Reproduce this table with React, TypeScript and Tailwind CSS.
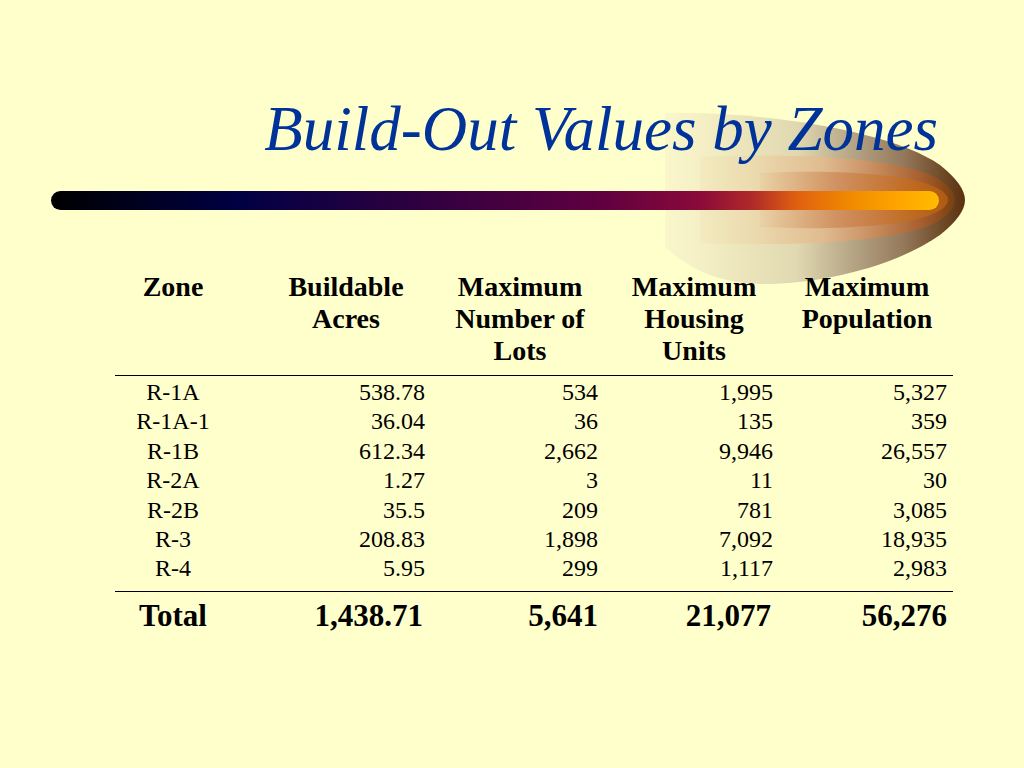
import React from "react";

const rows = [
  ["R-1A", "538.78", "534", "1,995", "5,327"],
  ["R-1A-1", "36.04", "36", "135", "359"],
  ["R-1B", "612.34", "2,662", "9,946", "26,557"],
  ["R-2A", "1.27", "3", "11", "30"],
  ["R-2B", "35.5", "209", "781", "3,085"],
  ["R-3", "208.83", "1,898", "7,092", "18,935"],
  ["R-4", "5.95", "299", "1,117", "2,983"],
];

const grid = "grid grid-cols-[144px_174px_174px_174px_172px]";

function Swoosh() {
  return (
    <svg
      className="absolute left-[660px] top-[105px]"
      width="310"
      height="185"
      viewBox="0 0 310 185"
    >
      <defs>
        <linearGradient id="gOuter" gradientUnits="userSpaceOnUse" x1="0" y1="0" x2="305" y2="0">
          <stop offset="0" stopColor="#fbf8cc" />
          <stop offset="0.15" stopColor="#f4eec4" />
          <stop offset="0.45" stopColor="#e0d8b0" />
          <stop offset="0.62" stopColor="#b8a888" />
          <stop offset="0.8" stopColor="#94785a" />
          <stop offset="0.92" stopColor="#704c2a" />
          <stop offset="1" stopColor="#5a3010" />
        </linearGradient>
        <linearGradient id="gMid" gradientUnits="userSpaceOnUse" x1="0" y1="0" x2="295" y2="0">
          <stop offset="0" stopColor="#f6ecc0" stopOpacity="0" />
          <stop offset="0.3" stopColor="#ecdcb0" />
          <stop offset="0.55" stopColor="#e0bc90" />
          <stop offset="0.7" stopColor="#cc9466" />
          <stop offset="0.88" stopColor="#a86030" />
          <stop offset="1" stopColor="#7a4010" />
        </linearGradient>
        <linearGradient id="gIn" gradientUnits="userSpaceOnUse" x1="90" y1="0" x2="288" y2="0">
          <stop offset="0" stopColor="#e0b080" stopOpacity="0" />
          <stop offset="0.45" stopColor="#d09060" />
          <stop offset="0.8" stopColor="#c06c24" />
          <stop offset="1" stopColor="#b05a10" />
        </linearGradient>
      </defs>
      <path
        d="M5,8 C100,6 230,25 280,60 Q305,80 305,95 Q305,110 280,130 C230,165 150,180 100,179 C60,178 30,165 5,142 Z"
        fill="url(#gOuter)"
      />
      <path
        d="M40,52 C150,47 250,55 280,75 Q295,85 295,95 Q295,105 280,115 C250,135 150,142 40,138 Z"
        fill="url(#gMid)"
      />
      <path
        d="M100,68 C180,64 250,70 275,82 Q288,88 288,95 Q288,102 275,108 C250,120 180,126 100,122 Z"
        fill="url(#gIn)"
      />
    </svg>
  );
}

export default function App() {
  return (
    <div
      className="relative w-[1024px] h-[768px] overflow-hidden bg-[#FFFFCC]"
      style={{ fontFamily: '"Liberation Serif", "Times New Roman", serif' }}
    >
      <Swoosh />
      <div className="relative pt-[98px]">
        <h1 className="text-right pr-[86px] text-[63px] leading-[62px] italic text-[#003399]">
          Build-Out Values by Zones
        </h1>
        <div className="mt-[31px] ml-[51px] w-[888px] h-[19px] rounded-full bg-[linear-gradient(to_right,#000000_0%,#000044_21%,#330040_43%,#600040_62%,#8a0a3a_73%,#b02a28_79%,#e06010_84%,#f08a00_90%,#ffa800_96%,#ffbb00_100%)]" />

        <div className="mt-[61px] ml-[115px] w-[838px] text-black">
          <div className={`${grid} pb-[8px] border-b border-black text-[28px] leading-[32px] font-bold`}>
            <div className="text-center pr-[28px]">Zone</div>
            <div className="text-center">
              Buildable
              <br />
              Acres
            </div>
            <div className="text-center">
              Maximum
              <br />
              Number of
              <br />
              Lots
            </div>
            <div className="text-center">
              Maximum
              <br />
              Housing
              <br />
              Units
            </div>
            <div className="text-center">
              Maximum
              <br />
              Population
            </div>
          </div>

          <div className="pt-[2px] pb-[7px] border-b border-black text-[24px] leading-[29.4px]">
            {rows.map((r) => (
              <div key={r[0]} className={grid}>
                <div className="text-center pr-[28px]">{r[0]}</div>
                <div className="text-right pr-[8px]">{r[1]}</div>
                <div className="text-right pr-[9px]">{r[2]}</div>
                <div className="text-right pr-[8px]">{r[3]}</div>
                <div className="text-right pr-[6px]">{r[4]}</div>
              </div>
            ))}
          </div>

          <div className={`${grid} pt-[6px] text-[31px] leading-[36px] font-bold`}>
            <div className="text-center pr-[28px]">Total</div>
            <div className="text-right pr-[10px]">1,438.71</div>
            <div className="text-right pr-[9px]">5,641</div>
            <div className="text-right pr-[10px]">21,077</div>
            <div className="text-right pr-[6px]">56,276</div>
          </div>
        </div>
      </div>
    </div>
  );
}
